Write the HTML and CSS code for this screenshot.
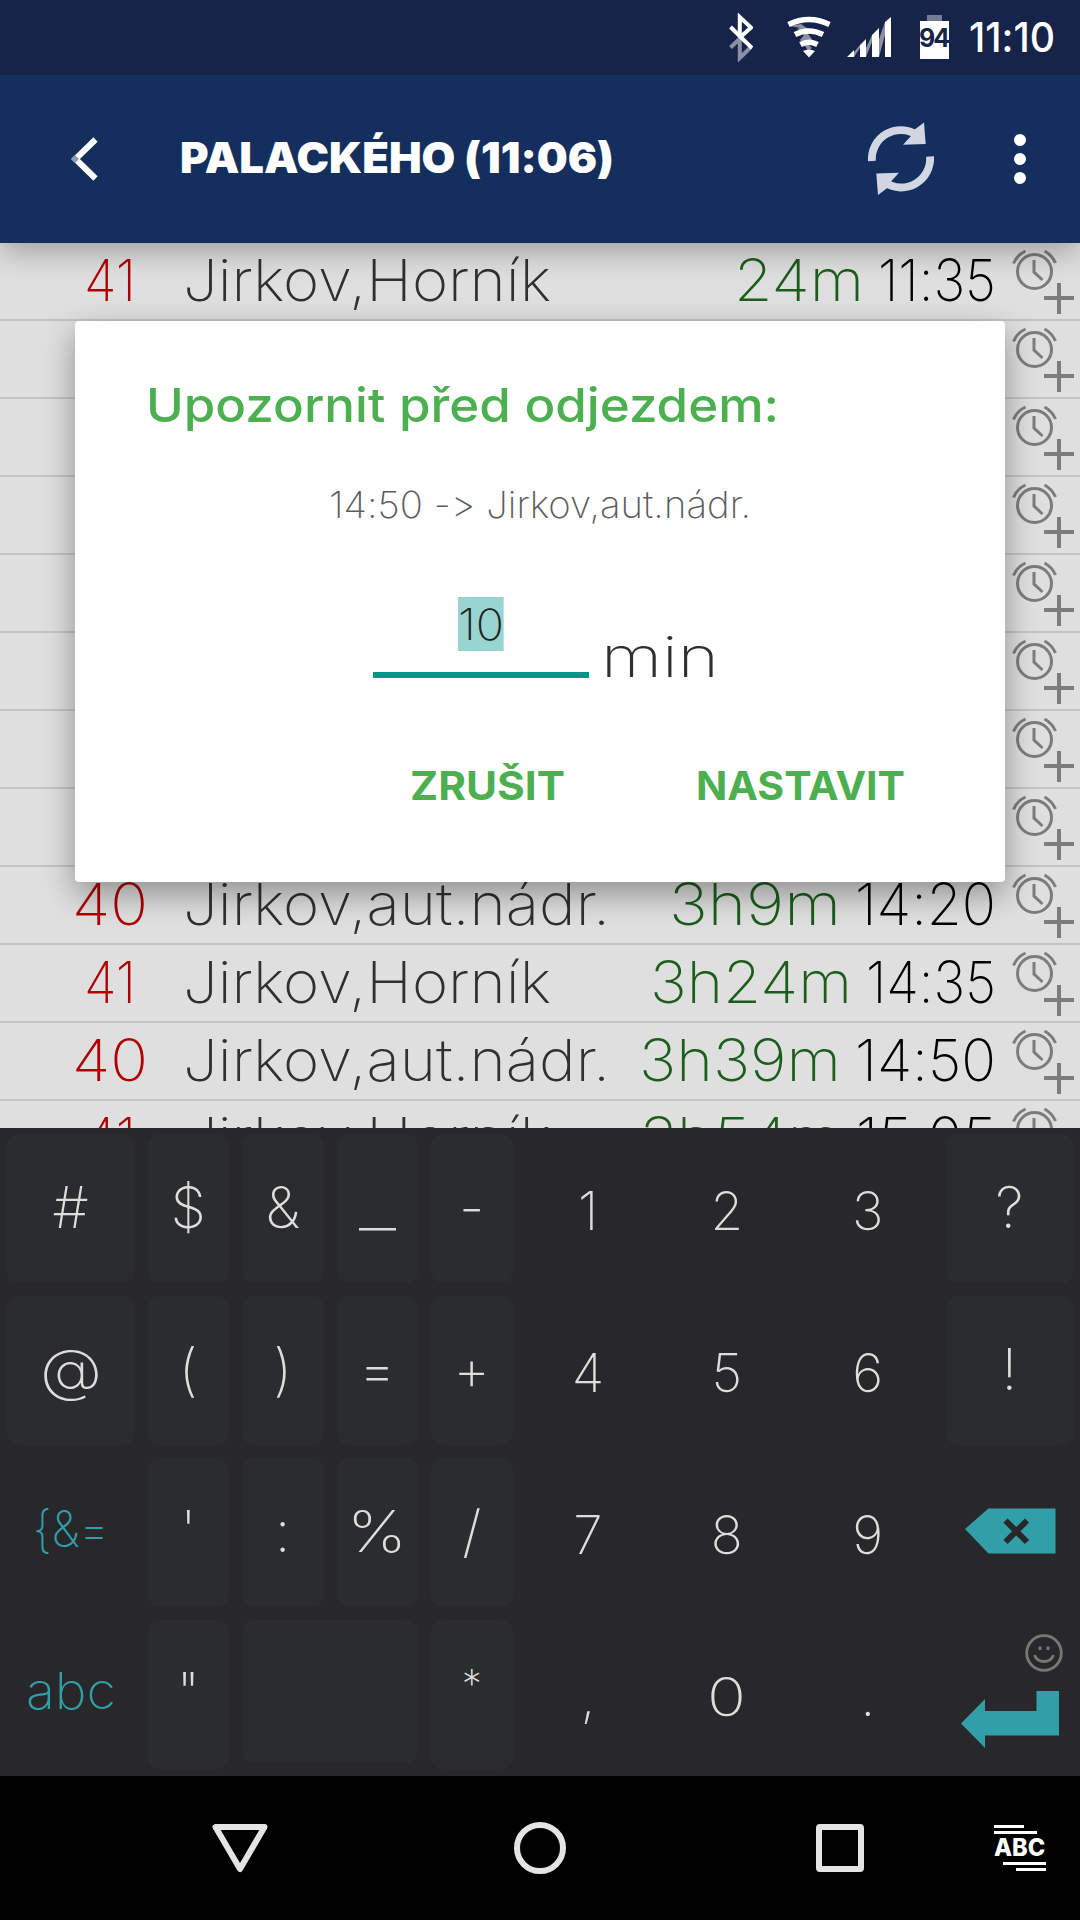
FILE: index.html
```html
<!DOCTYPE html>
<html lang="cs">
<head>
    <meta charset="UTF-8">
    <title>Palackého</title>
    <link rel="stylesheet" href="styles.css">
</head>
<body>
<svg class="defs">
    <symbol id="alarm" viewBox="0 0 70 76">
        <g fill="none" stroke="#7c7c7c">
            <circle cx="24.5" cy="28.5" r="17" stroke-width="3"/>
            <path d="M3.500 20.500Q7 12 15.500 8M34.500 8Q42 12 45.500 20" stroke-width="3"/>
            <path d="M24 17v12l8.500 8" stroke-width="3"/>
            <path d="M34 55h30M49 40v31" stroke-width="4"/>
        </g>
    </symbol>
</svg>
<div id="status">
    <svg width="24" height="50" viewBox="729 12 24 50" class="bt" fill="none" stroke-width="4">
        <path d="M730.500 47.500L741 37.500M739.800 36v22L751 47" stroke="#8b90a7"/>
        <path d="M730.500 27L752 48M739.800 36V17L751 27.500L741 36.500" stroke="#fff"/>
    </svg>
    <svg width="44" height="42" viewBox="787 16 44 42" class="wifi">
        <path d="M790 26l11-2 13 9-6 1 6 8-8 0 6 6-4 3-4-7-4-4 4-5-7-6 3-1z" fill="#8b90a7"/>
        <g fill="none" stroke="#fff" stroke-width="5.500">
            <path d="M788.500 24.500Q809 14.500 829.500 24.500"/>
            <path d="M795 34.500Q809 27.500 823 34.500"/>
            <path d="M800.500 44.500Q809 40 817.500 44.500"/>
        </g>
        <path d="M803 51q6-3 12 0l-6 6.500z" fill="#fff"/>
    </svg>
    <svg width="44" height="40" viewBox="847 17 44 40" class="signal">
        <path d="M854 52L860 45V48L854 57zM866 48L872 35V42L866 57zM879 39L885 22V35L879 57z" fill="#8b90a7"/>
        <path d="M847 57l7-7v7zM860 45l6-6v18h-6zM872 35l7-7v29h-7zM885 22l6-5v40h-6z" fill="#fff"/>
    </svg>
    <div class="battery"><span>94</span></div>
    <b data-w="86">11:10</b>
</div>
<header id="bar">
    <svg width="28" height="46" viewBox="71 136 28 46" class="back">
        <path d="M95.500 139.500L75.500 159L95.500 178.500" fill="none" stroke="#fff" stroke-width="6"/>
        <path d="M71 159l4-4 4 4-4 4z" fill="#8f9ab8"/>
    </svg>
    <h1 data-w="434">PALACKÉHO (11:06)</h1>
    <svg width="68" height="74" viewBox="867 122 68 74" class="refresh">
        <g id="half">
            <path d="M871.900 161A29 29 0 0 1 917 135" fill="none" stroke="#d2d6e2" stroke-width="7.800"/>
            <path d="M924 122.500L925.700 144L903 144.800L911 136L914 130z" fill="#d2d6e2"/>
        </g>
        <use href="#half" transform="rotate(180 901 158.800)"/>
    </svg>
    <p class="dots"><i></i><i></i><i></i></p>
</header>
<section id="list"></section>

<section id="dialog">
    <h2><span data-w="633">Upozornit před odjezdem:</span></h2>
    <p class="info"><span data-w="422">14:50 -&gt; Jirkov,aut.nádr.</span></p>
    <div class="field">
        <p class="input"><span data-w="46">10</span></p>
        <label><span data-w="118">min</span></label>
    </div>
    <div class="btns">
        <a data-w="155">ZRUŠIT</a>
        <a data-w="209">NASTAVIT</a>
    </div>
</section>

<section id="keys">
    <a class="key">#</a><a class="key">$</a><a class="key">&amp;</a><a class="key"><span data-w="37">_</span></a><a class="key">-</a>
    <a class="num">1</a><a class="num">2</a><a class="num">3</a><a class="key">?</a>

    <a class="key"><span data-w="62">@</span></a><a class="key">(</a><a class="key">)</a><a class="key">=</a><a class="key">+</a>
    <a class="num">4</a><a class="num">5</a><a class="num">6</a><a class="key">!</a>

    <a class="mode"><span data-w="76">{&amp;=</span></a><a class="key">'</a><a class="key">:</a><a class="key"><span data-w="60">%</span></a><a class="key">/</a>
    <a class="num">7</a><a class="num">8</a><a class="num">9</a>
    <a class="pic">
        <svg width="141" height="162" viewBox="939 1452 141 162">
            <path d="M965 1529L988.500 1508.500H1055.500V1553.500H988.500z" fill="#319fa7"/>
            <path d="M1005.500 1520.500L1027 1542M1027 1520.500L1005.500 1542" stroke="#28282a" stroke-width="6"/>
        </svg>
    </a>

    <a class="mode"><span data-w="90">abc</span></a><a class="key">"</a><a class="key space"></a><a class="key star">*</a>
    <a class="num">,</a><a class="num"><span data-w="39">0</span></a><a class="num">.</a>
    <a class="pic">
        <svg width="141" height="162" viewBox="939 1614 141 162">
            <g fill="none" stroke="#777" stroke-width="2.800">
                <circle cx="1044" cy="1653" r="17.300"/>
                <path d="M1034.500 1655Q1037 1661.500 1044 1661.500Q1051 1661.500 1053.500 1655"/>
            </g>
            <path d="M1038.500 1646.500h3v3.500h-3zM1046.500 1646.500h3v3.500h-3z" fill="#777"/>
            <path d="M961 1723.500L985 1699V1711H1036.500V1691H1059V1735.500H985V1748z" fill="#319fa7"/>
        </svg>
    </a>
</section>

<nav id="nav">
    <svg width="60" height="54" viewBox="210 1821 60 54">
        <path d="M215.500 1827H264.500L240 1869z" fill="none" stroke="#e4e4e4" stroke-width="6" stroke-linejoin="round"/>
    </svg>
    <svg width="54" height="54" viewBox="513 1821 54 54">
        <circle cx="540" cy="1848" r="23" fill="none" stroke="#e4e4e4" stroke-width="6"/>
    </svg>
    <svg width="50" height="54" viewBox="815 1821 50 54">
        <rect x="819" y="1827" width="42" height="42" rx="1" fill="none" stroke="#e4e4e4" stroke-width="6"/>
    </svg>
    <div class="abc"><i></i><i></i><b data-w="51">ABC</b><i></i><i></i></div>
</nav>

<script>
    // line, stop, time left, departure + widths of the texts
    var aRows=[
        ["41",52,"Jirkov,Horník",368,"24m",130,"11:35",118],
        [],[],[],[],[],[],[],
        ["40",76,"Jirkov,aut.nádr.",427,"3h9m",172,"14:20",141],
        ["41",52,"Jirkov,Horník",368,"3h24m",202,"14:35",130],
        ["40",76,"Jirkov,aut.nádr.",427,"3h39m",202,"14:50",141],
        ["41",52,"Jirkov,Horník",368,"3h54m",202,"15:05",140]
    ];
    var aNames=["line","stop","left","time"];
    var oList=document.getElementById("list");
    var sHtml="";
    for(var i=0;i<aRows.length;i++){
        sHtml+='<div class="row">';
        for(var j=0;j<4;j++){
            sHtml+='<p class="'+aNames[j]+'">';
            if(aRows[i].length){
                sHtml+='<span data-w="'+aRows[i][j*2+1]+'">'+aRows[i][j*2]+'</span>';
            }
            sHtml+='</p>';
        }
        sHtml+='<svg class="alarm"><use href="#alarm"/></svg></div>';
    }
    oList.innerHTML=sHtml;

    // stretch the text to the wanted width
    function fit(obj){
        var iWidth=obj.getBoundingClientRect().width;
        obj.style.transform="scaleX("+obj.dataset.w/iWidth+")";
        obj.style.marginRight=obj.dataset.w-iWidth+"px";
    }
    var aFit=document.querySelectorAll("[data-w]");
    for(var i=0;i<aFit.length;i++){
        fit(aFit[i]);
    }
</script>
</body>
</html>
```
FILE: styles.css
```css
body,h1,h2,p{margin: 0;padding: 0;}
body{ width: 1080px; height: 1920px; overflow: hidden; position: relative; background: #dfdfdf;
      font-family: Inter, "Open Sans", sans-serif; font-weight: 200; white-space: nowrap;
      font-variant-ligatures: none; font-feature-settings: "calt" 0; }
i{font-style: normal;}
svg{display: block; flex: none;}
[data-w]{ display: inline-block; flex: none; transform-origin: 0 0; }
.defs{ position: absolute; width: 0; height: 0; }

#status{ height: 75px; display: flex; align-items: flex-start; background: #16244a; color: #fff; position: relative; z-index: 2; }
#status .bt{ margin: 12px 0 0 729px; }
#status .wifi{ margin: 16px 0 0 34px; }
#status .signal{ margin: 17px 0 0 16px; }
#status b{ margin-left: 20px; font-size: 41px; font-weight: 500; line-height: 75px; }
.battery{ width: 29px; height: 38px; margin: 21px 0 0 29px; background: #fff; position: relative; }
.battery:before{ content: ""; position: absolute; left: 7px; top: -6px; width: 15px; height: 6px; background: #737c95; }
.battery span{ display: block; text-align: center; font-size: 25px; letter-spacing: -2px; margin-left: -2px;
               font-weight: 700; line-height: 34px; color: #16244a; }

#bar{ height: 168px; display: flex; align-items: center; background: #142f5d; position: relative; z-index: 1;
      box-shadow: 0 9px 28px rgba(0,0,0,.28); }
#bar .back{ margin-left: 71px; }
#bar h1{ margin-left: 81px; font-size: 43px; font-weight: 900; line-height: 64px; color: #fff; position: relative; top: -2px; }
#bar .refresh{ position: absolute; left: 867px; top: 47px; }
.dots{ position: absolute; left: 1014px; top: 59px; }
.dots i{ display: block; width: 12px; height: 12px; margin-bottom: 7px; border-radius: 6px; background: #fff; }

#list{ height: 885px; overflow: hidden; }
.row{ height: 76px; display: flex; border-bottom: 2px solid #c3c3c3; font-size: 58px; line-height: 74px; }
.line{ width: 220px; margin-right: -37px; text-align: center; color: #b00000; }
.stop{ width: 400px; color: #303030; }
.left{ flex: 1; text-align: right; color: #1b5e1b; }
.time{ margin-left: 14px; color: #000; }
.alarm{ width: 70px; height: 76px; margin-left: 14px; }

#dialog{ position: absolute; z-index: 2; left: 75px; top: 321px; width: 930px; height: 561px; background: #fff;
         border-radius: 4px; box-shadow: 0 12px 32px rgba(0,0,0,.36); }
#dialog h2{ margin: 54px 0 0 71px; font-size: 47px; font-weight: 500; line-height: 60px; color: #4caf50; }
.info{ margin-top: 45px; text-align: center; font-size: 37px; line-height: 50px; color: #5c5c5c; }
.field{ display: flex; margin: 67px 0 0 298px; }
.input{ width: 216px; height: 75px; border-bottom: 6px solid #009688; text-align: center; font-size: 43px; line-height: 54px; color: #222; }
.input span{ background: #99d5cf; }
.field label{ margin: 28px 0 0 12px; font-size: 56px; line-height: 64px; color: #303030; }
.btns{ display: flex; gap: 131px; margin: 72px 0 0 335px; font-size: 40px; font-weight: 700; line-height: 50px; color: #4caf50; }

#keys{ display: grid; grid-template-columns: 141px repeat(4,94.500px) 138px 139.500px 142.500px 141px; grid-auto-rows: 162px;
       background: #28282a; color: #ddd; text-align: center; }
.key{ margin: 6px 6.500px 7px; border-radius: 12px; background: #2b2c2e; font-size: 57px; line-height: 147px; }
.space{ grid-column: span 2; margin-bottom: 13px; }
.star{ font-size: 40px; line-height: 127px; }
.num{ font-size: 53px; line-height: 166px; }
.mode{ font-size: 50px; line-height: 155px; color: #319fa7; }

#nav{ height: 144px; display: flex; align-items: center; background: #000; }
#nav svg:nth-child(1){ margin-left: 210px; }
#nav svg:nth-child(2){ margin-left: 243px; }
#nav svg:nth-child(3){ margin-left: 248px; }
.abc{ width: 52px; height: 46px; margin-left: 129px; color: #fff; }
.abc i{ display: block; height: 3px; width: 30px; margin-bottom: 3px; background: #fff; }
.abc i:nth-child(2){ width: 43px; }
.abc b{ display: block; width: 52px; font-size: 24px; font-weight: 800; line-height: 18px; margin: 5px 0; }
.abc i:nth-child(4){ width: 43px; margin-left: 9px; }
.abc i:nth-child(5){ margin-left: 22px; }
```
